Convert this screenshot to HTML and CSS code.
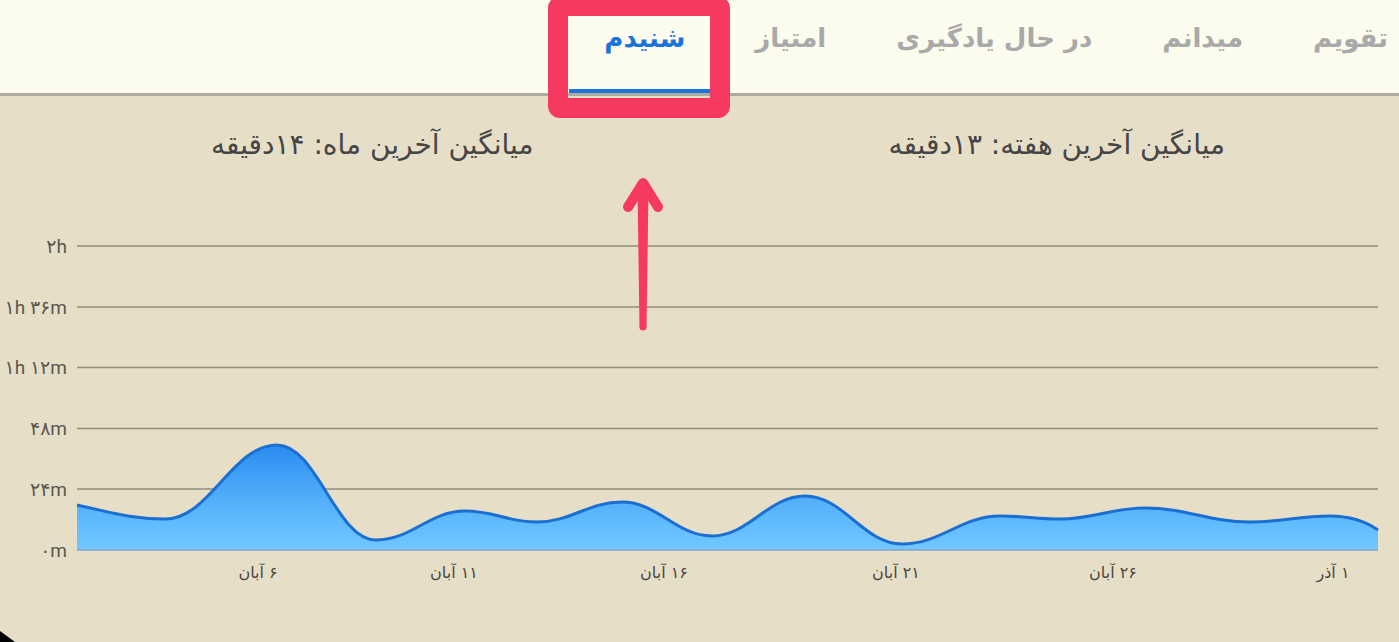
FILE: index.html
```html
<!DOCTYPE html>
<html lang="fa" dir="rtl">
<head>
    <meta charset="UTF-8">
    <meta name="viewport" content="width=device-width, initial-scale=1.0">
    <title>شنیدم</title>
    <link rel="stylesheet" href="styles.css">
</head>
<body>
    <div class="screen">
        <nav class="tabs">
            <a class="tab">تقویم</a>
            <a class="tab">میدانم</a>
            <a class="tab">در حال یادگیری</a>
            <a class="tab">امتیاز</a>
            <a class="tab active">شنیدم</a>
        </nav>

        <section class="averages">
            <div class="avg">میانگین آخرین هفته: ۱۳دقیقه</div>
            <div class="avg">میانگین آخرین ماه: ۱۴دقیقه</div>
        </section>

        <!-- نمودار زمان شنیدن -->
        <svg class="chart" viewBox="0 220 1399 422" xmlns="http://www.w3.org/2000/svg">
            <defs>
                <linearGradient id="areaFill" x1="0" y1="0" x2="0" y2="1">
                    <stop offset="0" stop-color="#2a8bf0"/>
                    <stop offset="0.55" stop-color="#55b1fb"/>
                    <stop offset="1" stop-color="#72c7ff"/>
                </linearGradient>
            </defs>

            <g class="grid">
                <line x1="77" y1="247" x2="1378" y2="247"/>
                <line x1="77" y1="308" x2="1378" y2="308"/>
                <line x1="77" y1="368.5" x2="1378" y2="368.5"/>
                <line x1="77" y1="429.5" x2="1378" y2="429.5"/>
                <line x1="77" y1="490" x2="1378" y2="490"/>
            </g>

            <g class="y-labels">
                <text x="67" y="254">۲h</text>
                <text x="67" y="315">۱h ۳۶m</text>
                <text x="67" y="375">۱h ۱۲m</text>
                <text x="67" y="436">۴۸m</text>
                <text x="67" y="497">۲۴m</text>
                <text x="67" y="558">۰m</text>
            </g>

            <path class="area" d="M77,506 C110,513 130,520 165,520 C210,520 232,446 277,446 C317,446 336,541 376,541 C412,541 429,512 465,512 C494,512 508,523 537,523 C571,523 588,503 622,503 C658,503 676,537 712,537 C749,537 768,497 805,497 C844,497 863,545 902,545 C941,545 961,517 1000,517 C1024,517 1036,520 1060,520 C1094,520 1111,509 1145,509 C1187,509 1208,523 1250,523 C1282,523 1298,517 1330,517 C1350,517 1365,522 1378,531 L1378,551 L77,551 Z"/>
            <line class="baseline" x1="77" y1="551" x2="1378" y2="551"/>
            <path class="curve" d="M77,506 C110,513 130,520 165,520 C210,520 232,446 277,446 C317,446 336,541 376,541 C412,541 429,512 465,512 C494,512 508,523 537,523 C571,523 588,503 622,503 C658,503 676,537 712,537 C749,537 768,497 805,497 C844,497 863,545 902,545 C941,545 961,517 1000,517 C1024,517 1036,520 1060,520 C1094,520 1111,509 1145,509 C1187,509 1208,523 1250,523 C1282,523 1298,517 1330,517 C1350,517 1365,522 1378,531"/>

            <g class="x-labels">
                <text x="258" y="579">۶ آبان</text>
                <text x="454" y="579">۱۱ آبان</text>
                <text x="664" y="579">۱۶ آبان</text>
                <text x="896" y="579">۲۱ آبان</text>
                <text x="1113" y="579">۲۶ آبان</text>
                <text x="1333" y="579">۱ آذر</text>
            </g>
        </svg>

        <!-- علامت راهنما روی تب -->
        <div class="mark-box"></div>
        <svg class="mark-arrow" viewBox="0 0 60 170" xmlns="http://www.w3.org/2000/svg">
            <polygon points="22.5,20 33.5,20 31.5,157 24.5,157"/>
            <circle cx="28" cy="157" r="3.5"/>
            <polyline points="13,37 28,13 43,37"/>
        </svg>

        <div class="corner"></div>
    </div>
</body>
</html>
```

FILE: styles.css
```css
html, body {
    margin: 0;
    padding: 0;
}
body {
    background: #e6dec7;
    font-family: 'DejaVu Sans', 'Noto Sans', sans-serif;
    overflow: hidden;
}
.screen {
    position: relative;
    height: 642px;
}
.tabs {
    display: flex;
    height: 93px;
    background: #fbfbee;
    border-bottom: 3px solid #aeaba1;
}
.tab {
    box-sizing: border-box;
    height: 93px;
    display: flex;
    align-items: center;
    padding: 0 35px 17px;
    font-size: 26px;
    font-weight: bold;
    color: #a9a9a9;
    white-space: nowrap;
    cursor: pointer;
}
.tab:first-child { padding-right: 11px; }
.tab.active {
    color: #1b74db;
    border-bottom: 4px solid #1b74db;
    padding-bottom: 13px;
}
.averages {
    display: flex;
    box-sizing: border-box;
    height: 123px;
    padding-top: 33px;
}
.avg {
    flex: 1;
    text-align: center;
    font-size: 28px;
    line-height: 32px;
    color: #454545;
}
.avg:last-child { padding-left: 30px; }
.chart {
    display: block;
    width: 1399px;
    height: 422px;
    direction: ltr;
}
.grid line {
    stroke: #928c7a;
    stroke-width: 1.3;
}
.y-labels text {
    font-family: 'Roboto', 'DejaVu Sans', sans-serif;
    font-size: 19px;
    fill: #5a5750;
    text-anchor: end;
}
.area { fill: url(#areaFill); }
.baseline {
    stroke: #7fa6c8;
    stroke-width: 1.5;
}
.curve {
    fill: none;
    stroke: #1a6fd3;
    stroke-width: 3;
}
.x-labels text {
    direction: rtl;
    font-size: 16px;
    fill: #4a4740;
    text-anchor: middle;
}
.mark-box {
    position: absolute;
    left: 548px;
    top: -4px;
    width: 182px;
    height: 122px;
    box-sizing: border-box;
    border: 20px solid #f5395f;
    border-radius: 12px;
}
.mark-arrow {
    position: absolute;
    left: 615px;
    top: 170px;
    width: 60px;
    height: 170px;
}
.mark-arrow polygon,
.mark-arrow circle { fill: #f5395f; }
.mark-arrow polyline {
    fill: none;
    stroke: #f5395f;
    stroke-width: 10;
    stroke-linecap: round;
    stroke-linejoin: round;
}
.corner {
    position: absolute;
    left: 0;
    bottom: 0;
    width: 15px;
    height: 11px;
    background: #000;
    clip-path: polygon(0 0, 0 100%, 100% 100%);
}
```
